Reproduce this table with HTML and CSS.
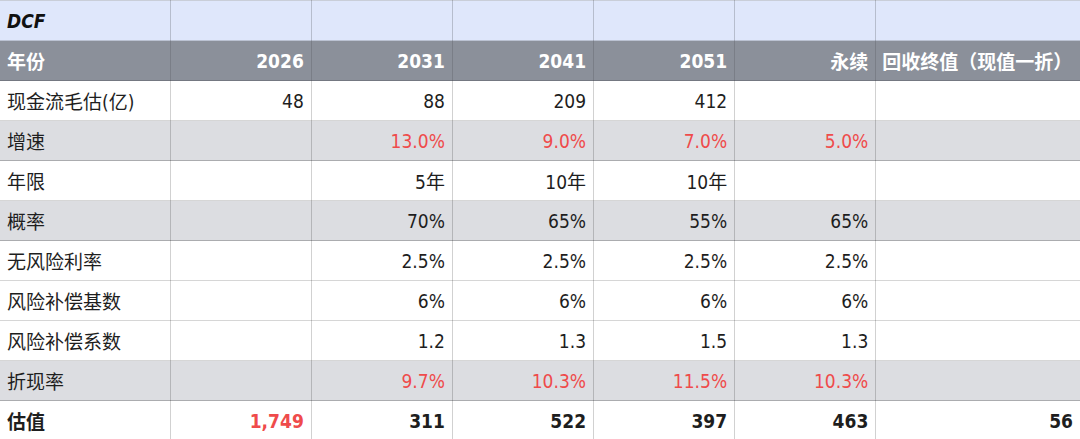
FILE: index.html
```html
<!DOCTYPE html>
<html lang="zh">
<head>
<meta charset="utf-8">
<link rel="stylesheet" href="styles.css">
</head>
<body>
<table class="dcf">
  <colgroup>
    <col class="c-label"><col class="c-num"><col class="c-num"><col class="c-num"><col class="c-num"><col class="c-num"><col class="c-last">
  </colgroup>
  <tr class="title"><td class="dcf-title">DCF</td><td></td><td></td><td></td><td></td><td></td><td></td></tr>
  <tr class="head"><td class="lbl">年份</td><td>2026</td><td>2031</td><td>2041</td><td>2051</td><td>永续</td><td class="left">回收终值（现值一折）</td></tr>
  <tr><td class="lbl">现金流毛估(亿)</td><td>48</td><td>88</td><td>209</td><td>412</td><td></td><td></td></tr>
  <tr class="gray"><td class="lbl">增速</td><td></td><td class="red">13.0%</td><td class="red">9.0%</td><td class="red">7.0%</td><td class="red">5.0%</td><td></td></tr>
  <tr><td class="lbl">年限</td><td></td><td>5年</td><td>10年</td><td>10年</td><td></td><td></td></tr>
  <tr class="gray"><td class="lbl">概率</td><td></td><td>70%</td><td>65%</td><td>55%</td><td>65%</td><td></td></tr>
  <tr><td class="lbl">无风险利率</td><td></td><td>2.5%</td><td>2.5%</td><td>2.5%</td><td>2.5%</td><td></td></tr>
  <tr><td class="lbl">风险补偿基数</td><td></td><td>6%</td><td>6%</td><td>6%</td><td>6%</td><td></td></tr>
  <tr><td class="lbl">风险补偿系数</td><td></td><td>1.2</td><td>1.3</td><td>1.5</td><td>1.3</td><td></td></tr>
  <tr class="gray"><td class="lbl">折现率</td><td></td><td class="red">9.7%</td><td class="red">10.3%</td><td class="red">11.5%</td><td class="red">10.3%</td><td></td></tr>
  <tr class="total"><td class="lbl">估值</td><td class="red">1,749</td><td>311</td><td>522</td><td>397</td><td>463</td><td>56</td></tr>
</table>
</body>
</html>
```
FILE: styles.css
```css
html, body {
  margin: 0;
  padding: 0;
  background: #ffffff;
}

.dcf {
  border-collapse: collapse;
  table-layout: fixed;
  width: 1080px;
  font-family: "DejaVu Sans Condensed", "DejaVu Sans", "Noto Sans CJK SC", sans-serif;
  font-stretch: condensed;
  font-size: 19px;
  color: #1e1e1e;
}

.c-label { width: 170px; }
.c-num { width: 141px; }
.c-last { width: 204px; }

.dcf td {
  height: 39px;
  padding: 0 7px;
  text-align: right;
  white-space: nowrap;
  border-right: 1px solid rgba(0, 0, 0, 0.18);
  border-bottom: 1px solid rgba(0, 0, 0, 0.16);
}

.dcf td:last-child { border-right: none; }

.dcf td.lbl,
.dcf td.left,
.dcf td.dcf-title {
  text-align: left;
}

.title td {
  background: #dfe7fb;
  border-top: 1px solid #c9ced8;
  height: 39px;
}

.dcf-title {
  font-weight: bold;
  font-style: italic;
  color: #111;
}

.head td {
  background: #8b909a;
  color: #ffffff;
  font-weight: bold;
  border-right-color: rgba(0, 0, 0, 0.12);
}

.gray td {
  background: #dcdde1;
  border-bottom-color: rgba(0, 0, 0, 0.22);
}

.red { color: #ef4b4b; }
.dcf .head td.left { padding-left: 6px; }

.total td {
  font-weight: bold;
  border-bottom: none;
}
```
